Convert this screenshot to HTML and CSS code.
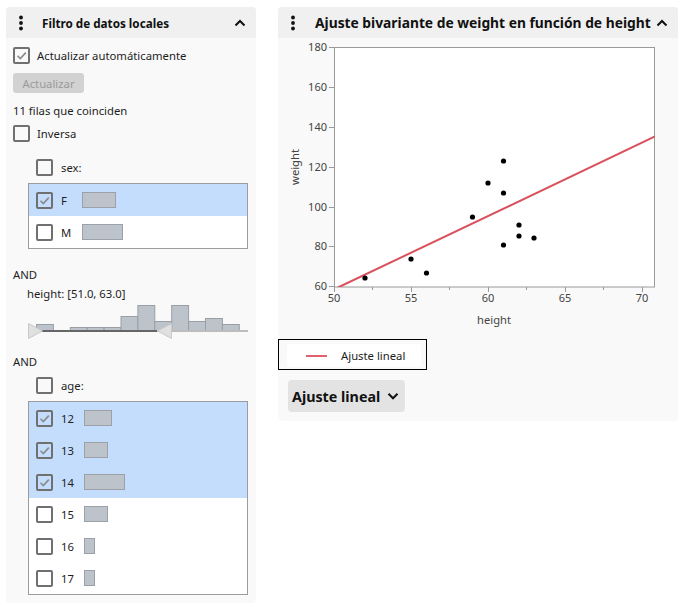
FILE: index.html
```html
<!DOCTYPE html>
<html lang="es">
<head>
<meta charset="utf-8">
<title>Filtro de datos locales</title>
<link rel="stylesheet" href="styles.css">
</head>
<body>
<div class="page">
  <section class="panel filter">
    <div class="hdr">
      <svg class="dots" width="6" height="16" viewBox="0 0 6 16"><circle cx="3" cy="2.5" r="1.9"/><circle cx="3" cy="8" r="1.9"/><circle cx="3" cy="13.5" r="1.9"/></svg>
      <span class="title small">Filtro de datos locales</span>
      <svg class="chev" width="12" height="8" viewBox="0 0 12 8"><polyline points="1.5,6.5 6,2 10.5,6.5"/></svg>
    </div>
    <div class="fbody">
      <div class="row r-auto"><span class="cb on"><svg viewBox="0 0 13 13"><polyline points="2.5,6.8 5.3,9.6 10.8,3.6"/></svg></span><span class="lbl">Actualizar automáticamente</span></div>
      <div class="btn-dis">Actualizar</div>
      <div class="row r-count">11 filas que coinciden</div>
      <div class="row r-inv"><span class="cb"></span><span class="lbl">Inversa</span></div>

      <div class="row r-col"><span class="cb"></span><span class="lbl">sex:</span></div>
      <div class="list">
        <div class="item sel"><span class="cb on"><svg viewBox="0 0 13 13"><polyline points="2.5,6.8 5.3,9.6 10.8,3.6"/></svg></span><span class="val v-sex">F</span><span class="bar" style="width:34px"></span></div>
        <div class="item"><span class="cb"></span><span class="val v-sex">M</span><span class="bar" style="width:41px"></span></div>
      </div>

      <div class="row r-and">AND</div>
      <div class="row r-range">height: [51.0, 63.0]</div>
      <svg class="hist" width="243" height="38" viewBox="0 0 243 38">
        <g class="hbars">
          <rect x="23.5" y="22.5" width="16.9" height="6.5"/>
          <rect x="57.3" y="25.5" width="16.9" height="3.5"/>
          <rect x="74.2" y="25.5" width="16.9" height="3.5"/>
          <rect x="91.1" y="25.5" width="16.9" height="3.5"/>
          <rect x="108" y="14.5" width="16.9" height="14.5"/>
          <rect x="124.9" y="3.5" width="16.9" height="25.5"/>
          <rect x="141.8" y="19.5" width="16.9" height="9.5"/>
          <rect x="158.7" y="3.5" width="16.9" height="25.5"/>
          <rect x="175.6" y="19.5" width="16.9" height="9.5"/>
          <rect x="192.5" y="16.5" width="16.9" height="12.5"/>
          <rect x="209.4" y="22.5" width="16.9" height="6.5"/>
        </g>
        <rect x="144" y="28" width="91" height="2" fill="#bdbdbd"/>
        <rect x="15" y="28" width="129" height="2" fill="#666"/>
        <polygon class="hnd" points="15.5,21.5 15.5,36.5 29.5,29"/>
        <polygon class="hnd" points="158.5,21.5 158.5,36.5 144.5,29"/>
      </svg>

      <div class="row r-and2">AND</div>
      <div class="row r-col r-age"><span class="cb"></span><span class="lbl">age:</span></div>
      <div class="list">
        <div class="item sel"><span class="cb on"><svg viewBox="0 0 13 13"><polyline points="2.5,6.8 5.3,9.6 10.8,3.6"/></svg></span><span class="val v-age">12</span><span class="bar" style="width:28px"></span></div>
        <div class="item sel"><span class="cb on"><svg viewBox="0 0 13 13"><polyline points="2.5,6.8 5.3,9.6 10.8,3.6"/></svg></span><span class="val v-age">13</span><span class="bar" style="width:24px"></span></div>
        <div class="item sel"><span class="cb on"><svg viewBox="0 0 13 13"><polyline points="2.5,6.8 5.3,9.6 10.8,3.6"/></svg></span><span class="val v-age">14</span><span class="bar" style="width:41px"></span></div>
        <div class="item"><span class="cb"></span><span class="val v-age">15</span><span class="bar" style="width:24px"></span></div>
        <div class="item"><span class="cb"></span><span class="val v-age">16</span><span class="bar" style="width:11px"></span></div>
        <div class="item"><span class="cb"></span><span class="val v-age">17</span><span class="bar" style="width:11px"></span></div>
      </div>
    </div>
  </section>

  <section class="panel report">
    <div class="hdr">
      <svg class="dots" width="6" height="16" viewBox="0 0 6 16"><circle cx="3" cy="2.5" r="1.9"/><circle cx="3" cy="8" r="1.9"/><circle cx="3" cy="13.5" r="1.9"/></svg>
      <span class="title big">Ajuste bivariante de weight en función de height</span>
      <svg class="chev" width="12" height="8" viewBox="0 0 12 8"><polyline points="1.5,6.5 6,2 10.5,6.5"/></svg>
    </div>
    <svg class="plot" width="400" height="296" viewBox="0 0 400 296">
      <defs><clipPath id="frameclip"><rect x="56" y="9" width="321" height="240"/></clipPath></defs>
      <rect x="56.5" y="9.5" width="320" height="239.5" fill="#fff" stroke="#9a9a9a"/>
      <g class="ticks">
        <line x1="51" y1="9.5" x2="56" y2="9.5"/>
        <line x1="51" y1="49.5" x2="56" y2="49.5"/>
        <line x1="51" y1="89.5" x2="56" y2="89.5"/>
        <line x1="51" y1="129.5" x2="56" y2="129.5"/>
        <line x1="51" y1="169.5" x2="56" y2="169.5"/>
        <line x1="51" y1="208.5" x2="56" y2="208.5"/>
        <line x1="51" y1="248.5" x2="56" y2="248.5"/>
        <line x1="56.5" y1="249" x2="56.5" y2="254"/>
        <line x1="94.5" y1="249" x2="94.5" y2="252"/>
        <line x1="133.5" y1="249" x2="133.5" y2="254"/>
        <line x1="171.5" y1="249" x2="171.5" y2="252"/>
        <line x1="210.5" y1="249" x2="210.5" y2="254"/>
        <line x1="248.5" y1="249" x2="248.5" y2="252"/>
        <line x1="287.5" y1="249" x2="287.5" y2="254"/>
        <line x1="325.5" y1="249" x2="325.5" y2="252"/>
        <line x1="364.5" y1="249" x2="364.5" y2="254"/>
      </g>
      <g class="ylab">
        <text x="49" y="13">180</text>
        <text x="49" y="53">160</text>
        <text x="49" y="93">140</text>
        <text x="49" y="133">120</text>
        <text x="49" y="173">100</text>
        <text x="49" y="212">80</text>
        <text x="49" y="252">60</text>
      </g>
      <g class="xlab">
        <text x="56" y="264">50</text>
        <text x="133" y="264">55</text>
        <text x="210" y="264">60</text>
        <text x="287" y="264">65</text>
        <text x="364" y="264">70</text>
      </g>
      <text class="axt" x="216" y="286">height</text>
      <text class="axt" transform="translate(21 129) rotate(-90)" x="0" y="0">weight</text>
      <line clip-path="url(#frameclip)" x1="60" y1="249.5" x2="377" y2="98.5" stroke="#d9515c" stroke-width="2"/>
      <g class="pts">
        <circle cx="87" cy="240" r="2.6"/>
        <circle cx="133" cy="221" r="2.6"/>
        <circle cx="148.5" cy="235" r="2.6"/>
        <circle cx="194.5" cy="179" r="2.6"/>
        <circle cx="210" cy="145" r="2.6"/>
        <circle cx="225.5" cy="123" r="2.6"/>
        <circle cx="225.5" cy="155" r="2.6"/>
        <circle cx="225.5" cy="207" r="2.6"/>
        <circle cx="241" cy="187" r="2.6"/>
        <circle cx="241" cy="198" r="2.6"/>
        <circle cx="256" cy="200" r="2.6"/>
      </g>
    </svg>
    <div class="legend">
      <div class="leg-in"><span class="leg-line"></span><span class="leg-txt">Ajuste lineal</span></div>
    </div>
    <div class="fitbtn"><span>Ajuste lineal</span><svg width="12" height="8" viewBox="0 0 12 8"><polyline points="1.5,1.8 6,6.3 10.5,1.8"/></svg></div>
  </section>
</div>
</body>
</html>
```
FILE: styles.css
```css
* { box-sizing: border-box; }
body {
  margin: 0;
  background: #fff;
  font-family: "Noto Sans", "Open Sans", sans-serif;
  font-size: 11.3px;
  color: #1e1e1e;
}
.page {
  display: flex;
  align-items: flex-start;
  gap: 22px;
  padding: 7px 0 0 6px;
}
.panel {
  background: #f9f9f9;
  border-radius: 4px;
}
.filter { width: 250px; height: 596px; }
.report { width: 400px; padding-bottom: 9px; }

.hdr {
  height: 31px;
  background: #f0f0f0;
  border-radius: 4px 4px 0 0;
  display: flex;
  align-items: center;
  padding-left: 12px;
}
.dots { fill: #111; flex: none; }
.title { font-weight: bold; white-space: nowrap; color: #111; }
.title.small { font-size: 11.7px; margin-left: 18px; }
.title.big { font-size: 13.8px; margin-left: 19px; }
.chev { margin-left: auto; margin-right: 10px; flex: none; }
.chev polyline, .fitbtn polyline { fill: none; stroke: #111; stroke-width: 2; }

.fbody { padding: 6px 0 0 7px; }
.row { display: flex; align-items: center; white-space: nowrap; }
.r-auto { height: 22px; }
.lbl { margin-left: 7px; }
.cb {
  width: 17px;
  height: 17px;
  border: 2px solid #707070;
  border-radius: 2px;
  flex: none;
  display: inline-flex;
}
.cb svg { width: 13px; height: 13px; }
.cb polyline { fill: none; stroke: #8a8a8a; stroke-width: 1.6; }

.btn-dis {
  margin-top: 7px;
  width: 71px;
  height: 20px;
  background: #d2d2d2;
  border-radius: 3px;
  color: #9a9a9a;
  display: flex;
  align-items: center;
  justify-content: center;
}
.r-count { height: 20px; margin-top: 7px; }
.r-inv { height: 22px; margin-top: 2px; }
.r-col { height: 22px; margin-top: 12px; padding-left: 23px; }
.r-col .lbl { margin-left: 8px; }

.list {
  margin-top: 5px;
  margin-left: 15px;
  width: 220px;
  border: 1px solid #9c9c9c;
  background: #fff;
}
.item {
  height: 32px;
  display: flex;
  align-items: center;
  padding-left: 7px;
}
.item.sel { background: #c4ddfc; }
.val { margin-left: 8px; flex: none; }
.v-sex { width: 21px; }
.v-age { width: 23px; }
.bar {
  height: 16px;
  background: #bdc3ca;
  border: 1px solid #9ba1a7;
  flex: none;
}

.r-and { height: 20px; margin-top: 15px; }
.r-range { height: 18px; padding-left: 14px; }
.hist { display: block; }
.hbars rect { fill: #bdc3ca; stroke: #999fa5; stroke-width: 1; }
.hnd { fill: #e0e0e0; stroke: #c9c9c9; stroke-width: 1; }
.r-and2 { height: 20px; margin-top: 11px; }
.r-age { margin-top: 3px; }

.plot { display: block; }
.ticks line { stroke: #9a9a9a; stroke-width: 1; }
.ylab text { font-size: 11px; fill: #444; text-anchor: end; }
.xlab text { font-size: 11px; fill: #444; text-anchor: middle; }
.axt { font-size: 11.2px; fill: #444; text-anchor: middle; }
.pts circle { fill: #000; }

.legend {
  margin-top: 5px;
  width: 149px;
  height: 31px;
  border: 1px solid #000;
  padding: 4px 5px 2px 8px;
}
.leg-in {
  height: 100%;
  background: #fff;
  border-radius: 3px;
  display: flex;
  align-items: center;
  padding-left: 19px;
}
.leg-line { width: 21px; height: 2px; background: #e06070; }
.leg-txt { margin-left: 14px; }

.fitbtn {
  margin: 10px 0 0 10px;
  width: 117px;
  height: 32px;
  background: #e3e3e3;
  border-radius: 4px;
  display: flex;
  align-items: center;
  padding-left: 4px;
  font-weight: bold;
  font-size: 14.3px;
  color: #111;
}
.fitbtn svg { margin-left: 7px; }
```
